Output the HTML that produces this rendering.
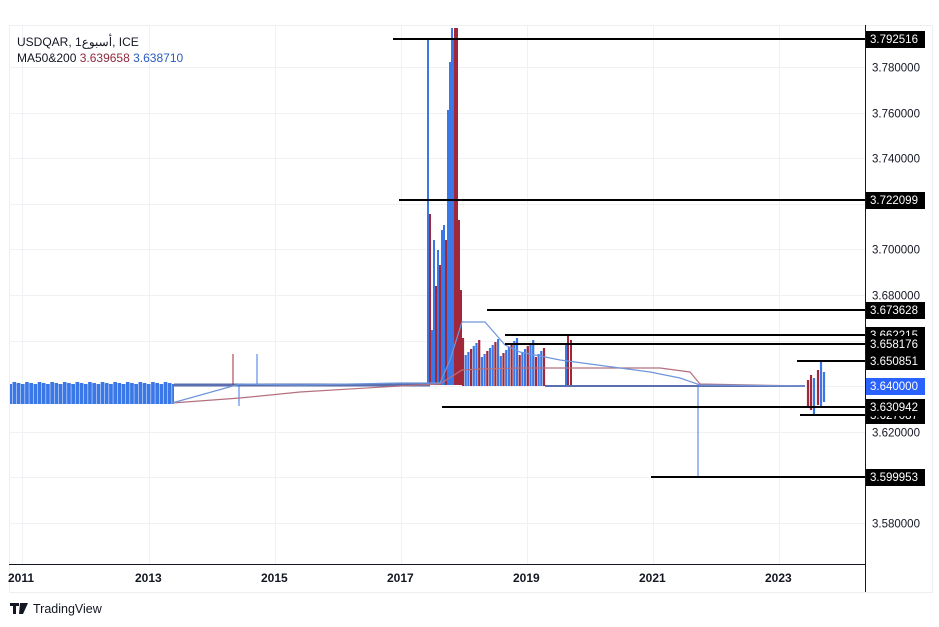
<!DOCTYPE html><html><head><meta charset="utf-8"><style>
html,body{margin:0;padding:0;background:#fff;width:939px;height:627px;overflow:hidden;font-family:"Liberation Sans","Noto Sans CJK SC",sans-serif}
svg{position:absolute;left:0;top:0}
</style></head><body>
<svg id="s" width="939" height="627" xmlns="http://www.w3.org/2000/svg" font-family="Liberation Sans, sans-serif">
<rect x="9.5" y="25.5" width="923" height="567" fill="#fff" stroke="#eceef2"/>
<g stroke="#f0f1f4" stroke-width="1" id="grid"></g>
<line x1="9" y1="564.5" x2="865" y2="564.5" stroke="#131722"/>
<line x1="865.5" y1="25" x2="865.5" y2="592" stroke="#131722"/>
<g id="bars"></g>
<polyline points="172,403 240,398 300,392 400,386 440,384 462,370 480,369 520,368 660,368 690,372 700,384 805,386" fill="none" stroke="#b5707f" stroke-width="1.2"/>
<polyline points="172,403 240,384 300,385 400,383 440,383 450,360 462,322 485,322 505,345 520,352 560,360 620,368 650,372 680,378 700,385 805,386" fill="none" stroke="#6f96db" stroke-width="1.2"/>
<g id="rays" stroke="#000" stroke-width="2"></g>
<g font-size="11.5" fill="#131722" id="ylab"></g>
<g id="lbls" font-size="11.5"></g>
<g font-size="12" font-weight="bold" fill="#131722">
<text x="8" y="582">2011</text><text x="135" y="582">2013</text><text x="261" y="582">2015</text><text x="387" y="582">2017</text><text x="513" y="582">2019</text><text x="639" y="582">2021</text><text x="765" y="582">2023</text></g>
<text x="17" y="46" font-size="12" fill="#131722">USDQAR, 1أسبوع, ICE</text>
<text x="17" y="62" font-size="12" fill="#131722">MA50&amp;200 <tspan fill="#8e2a3c">3.639658</tspan> <tspan fill="#2a5bbf">3.638710</tspan></text>
<path d="M10 603h9v3h-3v8h-3v-8h-3zM20 603h3l-2 11h-2zM23 603h5l-5 11h-3z" fill="#131722"/>
<text x="33" y="613" font-size="12.5" fill="#131722">TradingView</text>
</svg>
<script>
var N='http://www.w3.org/2000/svg';function el(p,t,a,tx){var e=document.createElementNS(N,t);for(var k in a)e.setAttribute(k,a[k]);if(tx)e.textContent=tx;document.getElementById(p).appendChild(e);return e}
function Y(p){return 67+(3.78-p)*2280}
[3.78,3.76,3.74,3.72,3.70,3.68,3.66,3.64,3.62,3.60,3.58].forEach(function(p){var y=Math.round(Y(p))+.5;el('grid','line',{x1:9,x2:865,y1:y,y2:y});el('ylab','text',{x:872,y:y+4},p.toFixed(6))});
[22,149,275,401,527,653,779].forEach(function(x){el('grid','line',{x1:x+.5,x2:x+.5,y1:25,y2:564})});
var B='#3b78e7',R='#a1283a';
el('bars','rect',{x:10,y:384,width:164,height:20,fill:B});
for(var x=12,i=0;x<174;x+=4.2,i++){el('bars','rect',{x:x,y:383,width:.5,height:21,fill:'#fff'});el('bars','rect',{x:x+.5,y:382+(i*7)%3,width:3.7,height:2,fill:B})}
el('bars','line',{x1:174,x2:430,y1:385,y2:385,stroke:'#5a6fb0','stroke-width':3});
el('bars','line',{x1:233,x2:233,y1:354,y2:385,stroke:R});el('bars','line',{x1:257,x2:257,y1:354,y2:385,stroke:B});el('bars','line',{x1:239,x2:239,y1:385,y2:406,stroke:B});
var sp=[[428,40,B],[430,214,R],[432,330,B],[434,240,B],[436,286,R],[438,250,B],[440,265,R],[442,230,B],[444,225,B],[446,240,R],[448,110,B],[450,62,B],[452,28,B],[453,40,B],[455,28,R],[457,28,R],[459,220,R],[461,290,R]];
sp.forEach(function(s){el('bars','line',{x1:s[0],x2:s[0],y1:s[1],y2:385,stroke:s[2],'stroke-width':2})});
for(var x=463,i=0;x<545;x+=2.7,i++){var t=338+((i*37)%20);el('bars','line',{x1:x,x2:x,y1:t,y2:386,stroke:i%3==0?R:B,'stroke-width':2.2})}
[[566,345,B],[568,335,R],[571,340,R]].forEach(function(s){el('bars','line',{x1:s[0],x2:s[0],y1:s[1],y2:386,stroke:s[2],'stroke-width':2})});
el('bars','line',{x1:545,x2:805,y1:386,y2:386,stroke:'#5a6fb0','stroke-width':2});
el('bars','line',{x1:698,x2:698,y1:386,y2:477,stroke:B});
[[808,380,407,R],[811,375,410,R],[814,378,414,B],[818,370,405,R],[821,360,408,B],[824,372,402,B]].forEach(function(s){el('bars','line',{x1:s[0],x2:s[0],y1:s[1],y2:s[2],stroke:s[3],'stroke-width':2.2})});
[[3.792516,393,39],[3.722099,399,200],[3.673628,487,310],[3.662215,505,335],[3.658176,505,344],[3.650851,797,361],[3.627087,800,415],[3.630942,442,407],[3.599953,651,477]].forEach(function(r){el('rays','line',{x1:r[1],x2:865,y1:r[2],y2:r[2]});el('lbls','rect',{x:866,y:r[2]-8,width:59,height:17,fill:'#000'});el('lbls','text',{x:870,y:r[2]+4,fill:'#fff'},r[0].toFixed(6))});
el('lbls','rect',{x:866,y:378,width:59,height:17,fill:'#2962ff'});el('lbls','text',{x:870,y:390,fill:'#fff'},'3.640000');
</script>
</body></html>
